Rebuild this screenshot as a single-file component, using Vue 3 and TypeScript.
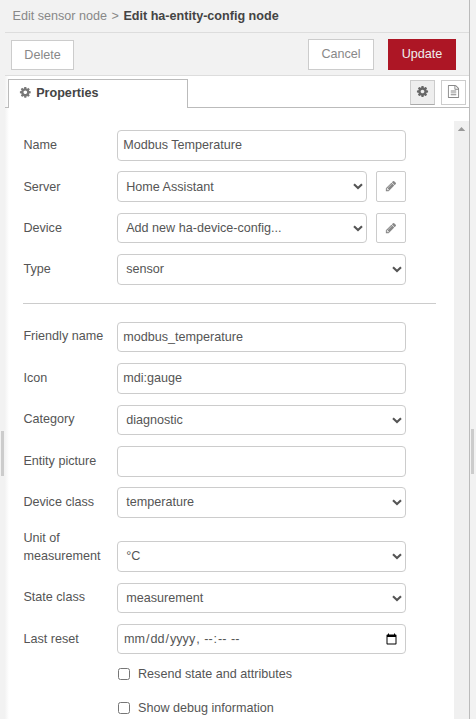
<script setup lang="ts">
import { ref } from 'vue'

type Kind = 'text' | 'select' | 'config' | 'datetime'

interface Field {
  id: string
  label: string
  kind: Kind
  value: string
  tall?: boolean
}

const general = ref<Field[]>([
  { id: 'name', label: 'Name', kind: 'text', value: 'Modbus Temperature' },
  { id: 'server', label: 'Server', kind: 'config', value: 'Home Assistant' },
  { id: 'device', label: 'Device', kind: 'config', value: 'Add new ha-device-config...' },
  { id: 'type', label: 'Type', kind: 'select', value: 'sensor' },
])

const entity = ref<Field[]>([
  { id: 'friendly', label: 'Friendly name', kind: 'text', value: 'modbus_temperature' },
  { id: 'icon', label: 'Icon', kind: 'text', value: 'mdi:gauge' },
  { id: 'category', label: 'Category', kind: 'select', value: 'diagnostic' },
  { id: 'picture', label: 'Entity picture', kind: 'text', value: '' },
  { id: 'class', label: 'Device class', kind: 'select', value: 'temperature' },
  { id: 'unit', label: 'Unit of measurement', kind: 'select', value: '°C', tall: true },
  { id: 'state', label: 'State class', kind: 'select', value: 'measurement' },
  { id: 'reset', label: 'Last reset', kind: 'datetime', value: '' },
])

const options = ref([
  { id: 'resend', label: 'Resend state and attributes', checked: false },
  { id: 'debug', label: 'Show debug information', checked: false },
])

const cog =
  'M1152 896q0-106-75-181t-181-75-181 75-75 181 75 181 181 75 181-75 75-181zm512-109v222q0 12-8 23t-20 13l-185 28q-19 54-39 91 35 50 107 138 10 12 10 25t-9 23q-27 37-99 108t-94 71q-12 0-26-9l-138-108q-44 23-91 38-16 136-29 186-7 28-36 28h-222q-14 0-24.5-8.5t-11.5-21.5l-28-184q-49-16-90-37l-141 107q-10 9-25 9-14 0-25-11-126-114-165-168-7-10-7-23 0-12 8-23 15-21 51-66.5t54-70.5q-27-50-41-99l-183-27q-13-2-21-12.5t-8-23.5v-222q0-12 8-23t19-13l186-28q14-46 39-92-40-57-107-138-10-12-10-24 0-10 9-23 26-36 98.5-107.5t94.5-71.5q13 0 26 10l138 107q44-23 91-38 16-136 29-186 7-28 36-28h222q14 0 24.5 8.5t11.5 21.5l28 184q49 16 90 37l142-107q9-9 24-9 13 0 25 10 129 119 165 170 7 8 7 22 0 12-8 23-15 21-51 66.5t-54 70.5q26 50 41 98l183 28q13 2 21 12.5t8 23.5z'
const pencil =
  'M491 1536l91-91-235-235-91 91v107h128v128h107zm523-928q0-22-22-22-10 0-17 7l-542 542q-7 7-7 17 0 22 22 22 10 0 17-7l542-542q7-7 7-17zm-54-192l416 416-832 832h-416v-416zm683 96q0 53-37 90l-166 166-416-416 166-165q36-38 90-38 53 0 91 38l235 234q37 39 37 91z'
const fileText =
  'M1596 380q28 28 48 76t20 88v1152q0 40-28 68t-68 28h-1344q-40 0-68-28t-28-68v-1600q0-40 28-68t68-28h896q40 0 88 20t76 48zm-444-244v376h376q-10-29-22-41l-313-313q-12-12-41-22zm384 1528v-1024h-416q-40 0-68-28t-28-68v-416h-768v1536h1280zm-1024-864q0-14 9-23t23-9h704q14 0 23 9t9 23v64q0 14-9 23t-23 9h-704q-14 0-23-9t-9-23v-64zm736 224q14 0 23 9t9 23v64q0 14-9 23t-23 9h-704q-14 0-23-9t-9-23v-64q0-14 9-23t23-9h704zm0 256q14 0 23 9t9 23v64q0 14-9 23t-23 9h-704q-14 0-23-9t-9-23v-64q0-14 9-23t23-9h704z'
</script>

<template>
  <div class="workspace">
    <div class="gutter left"><span class="handle"></span></div>

    <main class="tray">
      <header class="crumbs">
        <span>Edit sensor node</span><span class="sep">&gt;</span><b>Edit ha-entity-config node</b>
      </header>

      <div class="toolbar">
        <button class="btn delete">Delete</button>
        <button class="btn cancel">Cancel</button>
        <button class="btn primary">Update</button>
      </div>

      <nav class="tabs">
        <div class="tab-lead"></div>
        <div class="tab">
          <svg class="tab-icon" viewBox="0 0 1792 1792"><path :d="cog" /></svg>
          <span>Properties</span>
        </div>
        <div class="tab-rest">
          <button class="square active">
            <svg viewBox="0 0 1792 1792"><path :d="cog" /></svg>
          </button>
          <button class="square">
            <svg viewBox="0 0 1792 1792"><path :d="fileText" /></svg>
          </button>
        </div>
      </nav>

      <div class="body">
        <form class="form" @submit.prevent>
          <template v-for="(group, g) in [general, entity]" :key="g">
            <hr v-if="g > 0" />
            <div v-for="f in group" :key="f.id" class="row" :class="{ tall: f.tall, lower: g > 0 }">
              <label :for="f.id">{{ f.label }}</label>
              <input v-if="f.kind === 'text'" :id="f.id" v-model="f.value" class="control" type="text" />
              <input
                v-else-if="f.kind === 'datetime'"
                :id="f.id"
                v-model="f.value"
                class="control datetime"
                type="datetime-local"
              />
              <div v-else class="select">
                <select :id="f.id" v-model="f.value" class="control">
                  <option>{{ f.value }}</option>
                </select>
                <svg class="chevron" viewBox="0 0 10 7"><path d="M1 1.3 5 5.1 9 1.3" /></svg>
              </div>
              <button v-if="f.kind === 'config'" class="edit" type="button">
                <svg viewBox="0 0 1792 1792"><path :d="pencil" /></svg>
              </button>
            </div>
          </template>
          <label v-for="o in options" :key="o.id" class="check">
            <input v-model="o.checked" type="checkbox" />
            <span>{{ o.label }}</span>
          </label>
        </form>
        <div class="scrollbar"><span class="arrow"></span></div>
      </div>
    </main>

    <div class="gutter right"><span class="handle"></span></div>
  </div>
</template>

<style>
body {
  overflow: hidden;
}
</style>

<style scoped>
* {
  box-sizing: border-box;
}
.workspace {
  display: flex;
  height: 719px;
  overflow: hidden;
  background: #fff;
  color: #555;
  font: 12.6px/18px 'Liberation Sans', Arial, sans-serif;
}
button,
input,
select {
  margin: 0;
  color: inherit;
  font: inherit;
}
.gutter {
  flex: none;
  background: #f2f2f2;
}
.gutter.left {
  width: 5px;
  padding: 431px 0 0 1px;
}
.gutter.right {
  width: 7px;
  padding: 429px 0 0 1px;
  border-left: 1px solid #bbb;
}
.handle {
  display: block;
  width: 3px;
  height: 45px;
  background: #ccc;
}
.tray {
  flex: 1;
  display: flex;
  flex-direction: column;
  min-width: 0;
  background: linear-gradient(to right, #f3f3f3, #fff 4px);
}
.crumbs {
  flex: none;
  height: 33px;
  padding: 7px 0 0 7.5px;
  border-bottom: 1px solid #ddd;
  background: #f2f2f2;
  color: #888;
  white-space: nowrap;
}
.crumbs b {
  color: #444;
}
.sep {
  margin: 0 4.5px;
}
.toolbar {
  flex: none;
  display: flex;
  align-items: flex-start;
  height: 43px;
  padding: 6px 13px 0 6px;
  border-bottom: 1px solid #ddd;
  background: #f2f2f2;
}
.btn {
  height: 31px;
  padding: 0 0 2px;
  border: 1px solid #ccc;
  background: #fff;
  color: #888;
}
.delete {
  width: 63px;
  height: 30px;
  margin: 1px auto 0 0;
  padding: 0;
}
.cancel {
  width: 66px;
  margin-right: 14px;
}
.primary {
  width: 68px;
  border-color: #ad1625;
  background: #ad1625;
  color: #eee;
}
.tabs {
  flex: none;
  display: flex;
  height: 32px;
}
.tab-lead {
  width: 3px;
  border-bottom: 1px solid #bbb;
}
.tab {
  display: flex;
  align-items: center;
  gap: 4.6px;
  width: 180px;
  margin-top: 3px;
  padding: 0 0 2px 10px;
  border: 1px solid #bbb;
  border-bottom: 0;
  background: #fff;
  color: #444;
  font-weight: bold;
}
.tab-icon {
  width: 12.6px;
  height: 12.6px;
  margin-bottom: 1px;
  fill: #777;
}
.tab-rest {
  flex: 1;
  display: flex;
  justify-content: flex-end;
  gap: 6px;
  padding: 4px 3px 0 0;
  border-bottom: 1px solid #bbb;
}
.square {
  display: grid;
  place-items: center;
  width: 25px;
  height: 25px;
  padding: 0 0 2px;
  border: 1px solid #ccc;
  background: #fff;
}
.square svg {
  width: 13px;
  height: 13px;
  fill: #888;
}
.square.active {
  border-bottom-color: #aaa;
  background: #eee;
}
.square.active svg {
  fill: #666;
}
.body {
  flex: 1;
  display: flex;
  min-height: 0;
  padding-top: 13px;
}
.form {
  flex: 1;
  min-width: 0;
  padding: 9.05px 18px 0 18px;
}
.row {
  display: flex;
  height: 30.6px;
  margin-bottom: 10.8px;
}
.row > label {
  flex: none;
  width: 94px;
  padding: 6.15px 8px 0 0.4px;
}
.row.lower > label {
  padding-top: 5.6px;
}
.row.tall {
  height: 43.05px;
  padding-top: 12.45px;
}
.row.tall > label {
  margin-top: -12.45px;
  padding-top: 0.3px;
}
.control {
  display: block;
  width: 289px;
  height: 30.6px;
  padding: 0 5.2px 0.3px;
  border: 1px solid #ccc;
  border-radius: 4px;
  outline: 0;
  background: #fff;
}
.select {
  position: relative;
  flex: 0 0 289px;
}
.select:not(:last-child) {
  flex-basis: 250px;
}
.select .control {
  width: 100%;
  padding: 0 20px 0.3px 8.2px;
  appearance: none;
}
.chevron {
  position: absolute;
  top: 12px;
  right: 4px;
  width: 10px;
  height: 7px;
  fill: none;
  stroke: #555;
  stroke-width: 2.1;
  pointer-events: none;
}
.edit {
  display: grid;
  place-items: center;
  width: 30px;
  height: 30.6px;
  margin-left: 9px;
  padding: 0 1px 1px 0;
  border: 1px solid #ccc;
  border-radius: 2px;
  background: #fff;
}
.edit svg {
  width: 12px;
  height: 12px;
  fill: #888;
}
hr {
  height: 1px;
  margin: 18.2px 0 17.75px;
  border: 0;
  background: #ccc;
}
.datetime {
  height: 30.4px;
  padding: 0 5px;
}
.check {
  display: flex;
  align-items: center;
  gap: 8px;
  height: 18px;
  margin: 0 0 15.6px 95px;
}
.row + .check {
  margin-top: -0.15px;
}
.check input {
  width: 12px;
  height: 12px;
}
.scrollbar {
  width: 15px;
  padding: 6px 0 0 3.5px;
  background: #f0f0f0;
}
.arrow {
  display: block;
  width: 8px;
  height: 4.2px;
  background: #999;
  clip-path: polygon(50% 0, 100% 100%, 0 100%);
}
</style>
